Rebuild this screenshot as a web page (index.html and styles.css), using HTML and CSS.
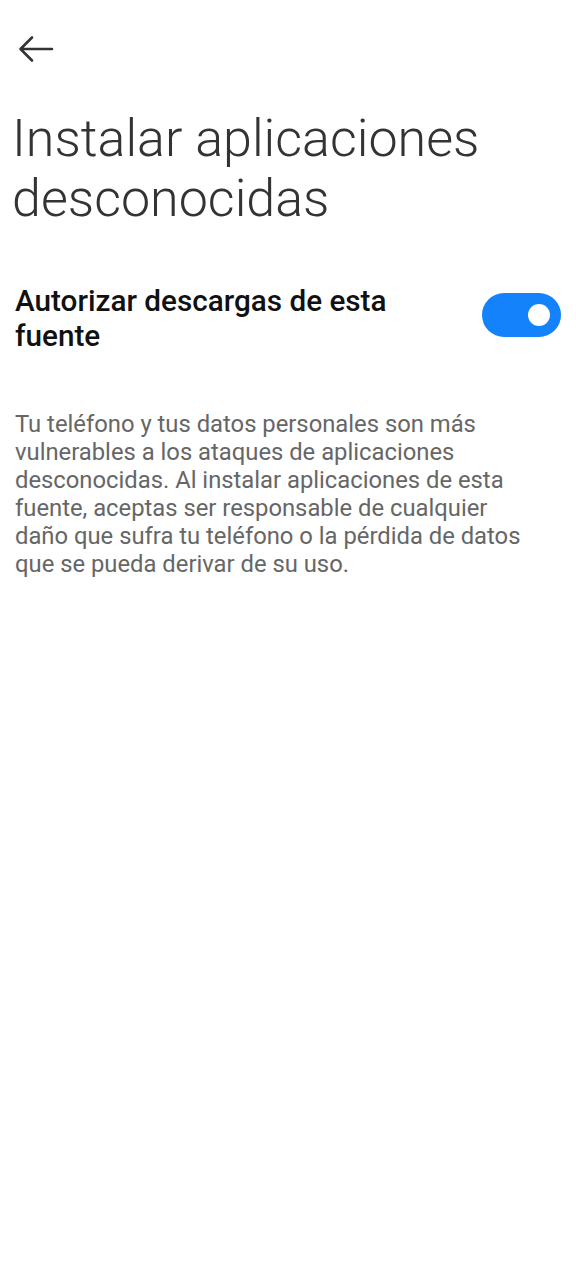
FILE: index.html
```html
<!DOCTYPE html>
<html lang="es">
<head>
<meta charset="utf-8">
<link rel="stylesheet" href="styles.css">
</head>
<body>
<div class="page">
  <header class="topbar">
    <svg class="back" width="36" height="28" viewBox="0 0 36 28" aria-hidden="true">
      <path d="M34 14 H3 M14 2.5 L2.5 14 L14 25.5" fill="none" stroke="#333" stroke-width="2.6" stroke-linecap="round" stroke-linejoin="round"/>
    </svg>
  </header>
  <h1 class="title">Instalar aplicaciones desconocidas</h1>
  <div class="setting">
    <div class="setting-label">Autorizar descargas de esta fuente</div>
    <div class="switch on"><span class="knob"></span></div>
  </div>
  <p class="desc">Tu teléfono y tus datos personales son más vulnerables a los ataques de aplicaciones desconocidas. Al instalar aplicaciones de esta fuente, aceptas ser responsable de cualquier daño que sufra tu teléfono o la pérdida de datos que se pueda derivar de su uso.</p>
</div>
</body>
</html>
```
FILE: styles.css
```css
html, body {
  margin: 0;
  padding: 0;
  background: #ffffff;
}
body {
  font-family: Roboto, "Noto Sans", sans-serif;
}
.page {
  width: 576px;
  min-height: 1280px;
  box-sizing: border-box;
}
.topbar {
  height: 96px;
  padding: 35px 0 0 18px;
  box-sizing: border-box;
}
.back {
  display: block;
}
.title {
  margin: 13px 0 0 0;
  padding: 0 30px 0 12px;
  font-weight: 300;
  font-size: 52px;
  line-height: 60px;
  color: #333333;
  letter-spacing: 0;
}
.setting {
  display: flex;
  align-items: flex-start;
  justify-content: space-between;
  margin-top: 54px;
  padding: 0 15px 0 15px;
}
.setting-label {
  font-weight: 500;
  font-size: 29.7px;
  line-height: 35px;
  color: #111111;
  width: 420px;
}
.switch {
  position: relative;
  width: 79px;
  height: 44px;
  border-radius: 22px;
  background: #1482fa;
  margin-top: 10px;
  flex: none;
}
.knob {
  position: absolute;
  width: 22px;
  height: 22px;
  border-radius: 50%;
  background: #ffffff;
  top: 11px;
  right: 11px;
}
.desc {
  margin: 57px 0 0 0;
  padding: 0 44px 0 15px;
  font-size: 23.8px;
  line-height: 28px;
  color: #666666;
}
```
